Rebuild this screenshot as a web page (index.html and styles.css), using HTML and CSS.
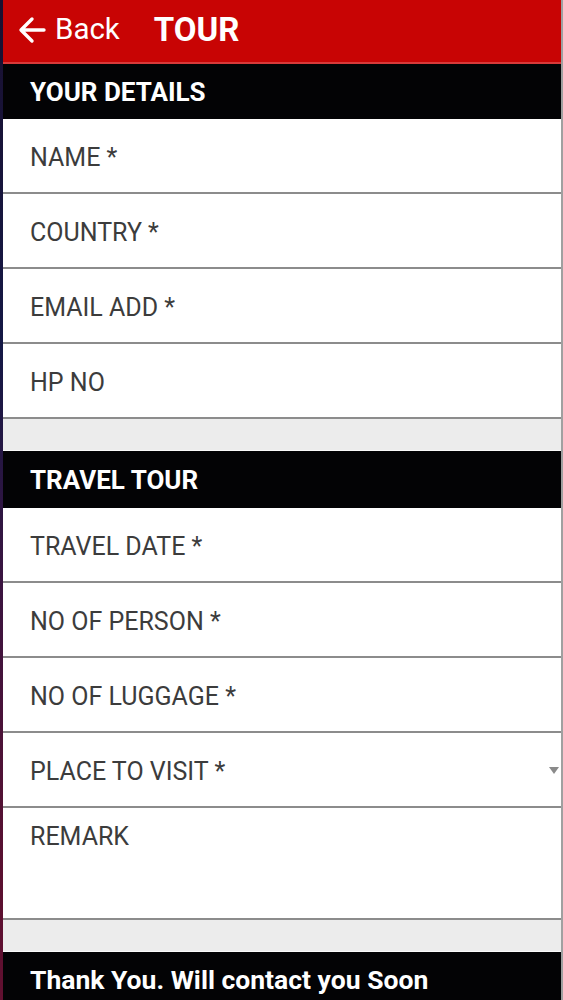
FILE: index.html
```html
<!DOCTYPE html>
<html>
<head>
<meta charset="utf-8">
<link rel="stylesheet" href="styles.css">
</head>
<body>
<div class="app">
  <div class="edge"></div>
  <div class="main">
    <header class="topbar">
      <svg class="back-icon" width="30" height="30" viewBox="0 0 30 30">
        <path d="M27 15H5M15 4L4 15l11 11" fill="none" stroke="#fff" stroke-width="3.4" stroke-linecap="round" stroke-linejoin="round"/>
      </svg>
      <span class="back">Back</span>
      <span class="title">TOUR</span>
    </header>

    <div class="section-head">YOUR DETAILS</div>
    <div class="field">NAME *</div>
    <div class="field">COUNTRY *</div>
    <div class="field">EMAIL ADD *</div>
    <div class="field">HP NO</div>
    <div class="gap"></div>

    <div class="section-head second">TRAVEL TOUR</div>
    <div class="field">TRAVEL DATE *</div>
    <div class="field">NO OF PERSON *</div>
    <div class="field">NO OF LUGGAGE *</div>
    <div class="field select">PLACE TO VISIT *<span class="caret"></span></div>
    <div class="field remark">REMARK</div>
    <div class="gap last"></div>

    <div class="footer">
      <div class="msg">Thank You. Will contact you Soon</div>
      <div class="sub">SUBMIT</div>
    </div>
  </div>
</div>
</body>
</html>
```

FILE: styles.css
```css
html, body {
  margin: 0;
  padding: 0;
  background: #ffffff;
}
body {
  width: 563px;
  height: 1000px;
  overflow: hidden;
  font-family: Roboto, "Liberation Sans", sans-serif;
}
.app {
  display: flex;
  width: 563px;
}
.edge {
  width: 3px;
  flex: none;
  background: linear-gradient(#1a1030 0%, #141845 30%, #3a1440 50%, #5a1030 75%, #6a1030 100%);
}
.main {
  flex: 1;
  border-right: 2px solid #a0a0a0;
  display: flex;
  flex-direction: column;
}
.topbar {
  height: 62px;
  background: #c80404;
  border-bottom: 2px solid #d83a3a;
  display: flex;
  align-items: center;
  color: #fff;
  padding-left: 14px;
}
.back-icon {
  margin-right: 8px;
  margin-top: -2px;
}
.back {
  font-size: 29.5px;
  margin-right: 34px;
  margin-top: -4px;
}
.title {
  font-size: 33px;
  font-weight: bold;
  margin-top: -4px;
}
.section-head {
  height: 55px;
  background: #030305;
  color: #fff;
  font-size: 26px;
  font-weight: bold;
  display: flex;
  align-items: center;
  padding-left: 27px;
}
.section-head.second {
  height: 57px;
}
.field {
  box-sizing: border-box;
  height: 75px;
  border-bottom: 2px solid #8c8c8c;
  display: flex;
  align-items: center;
  padding-left: 27px;
  padding-top: 4px;
  font-size: 25px;
  color: #3c3c3c;
  position: relative;
}
.field.remark {
  height: 112px;
  align-items: flex-start;
  line-height: 1;
  padding-top: 16px;
}
.caret {
  position: absolute;
  right: 2px;
  top: 34px;
  width: 0;
  height: 0;
  border-left: 5px solid transparent;
  border-right: 5px solid transparent;
  border-top: 7px solid #8a8a8a;
}
.gap {
  height: 31px;
  background: #ececec;
  border-bottom: 1px solid #fafafa;
}
.footer {
  background: #030305;
  color: #fff;
  padding-left: 27px;
  padding-top: 12px;
  height: 200px;
}
.msg {
  font-size: 26.5px;
  font-weight: bold;
}
.sub {
  font-size: 25px;
  font-weight: bold;
  margin-left: 210px;
  margin-top: 12px;
}
```
